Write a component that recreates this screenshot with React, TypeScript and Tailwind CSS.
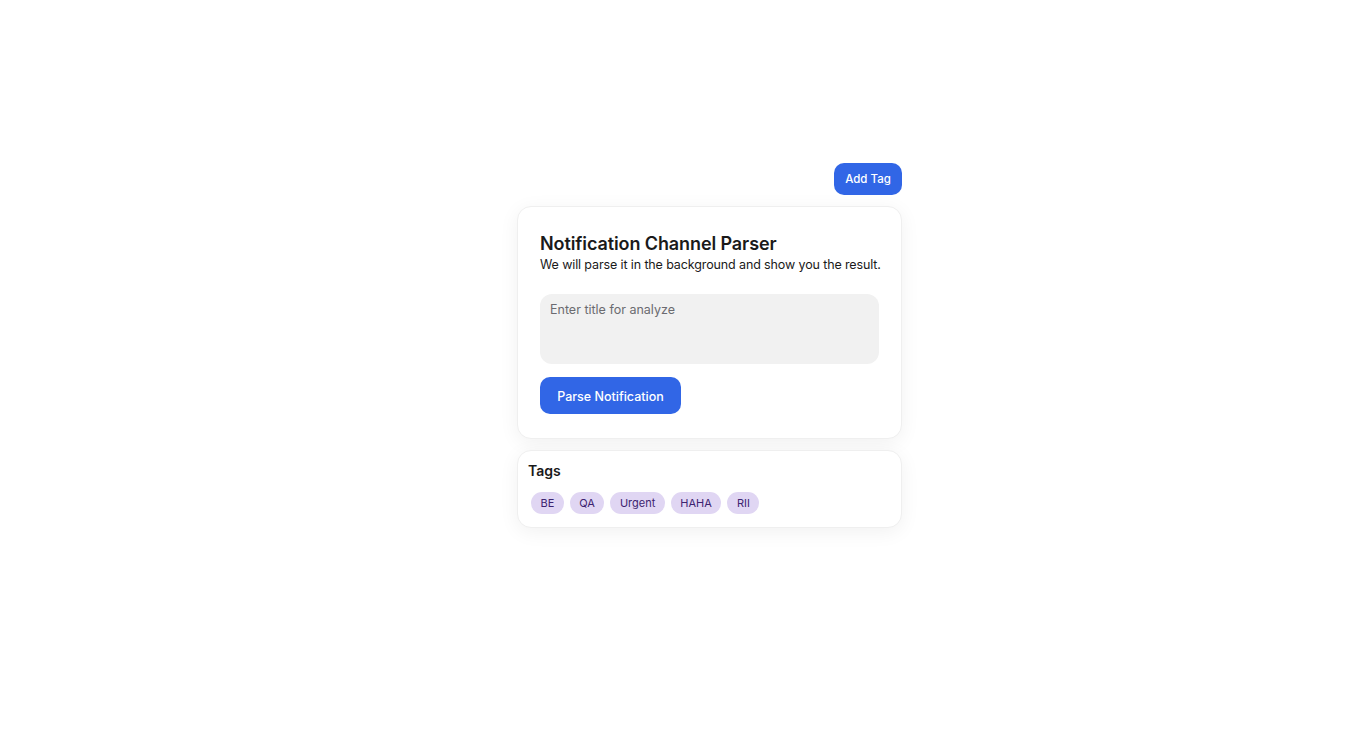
import React from "react";

export default function App() {
  const tags = ["BE", "QA", "Urgent", "HAHA", "RII"];
  return (
    <div
      className="min-h-screen w-full bg-white"
      style={{ fontFamily: "Inter, 'Noto Sans', sans-serif" }}
    >
      <div className="ml-[517px] w-[385px] pt-[163px] flex flex-col">
        <div className="flex justify-end">
          <button className="flex h-[32px] w-[68px] items-center justify-center rounded-[10px] bg-[#3166e6] pt-[2px] text-[11.5px] leading-none font-medium text-white">
            Add Tag
          </button>
        </div>
        <div className="mt-[11px] rounded-[14px] border border-[#efefef] bg-white px-[22px] pt-[24px] pb-[24px] shadow-[0_4px_20px_rgba(0,0,0,0.06)]">
          <h1 className="whitespace-nowrap text-[18px] font-semibold leading-[26px] tracking-[-0.1px] text-[#1a1a1a]">
            Notification Channel Parser
          </h1>
          <p className="whitespace-nowrap text-[12.5px] leading-[16px] tracking-[-0.12px] text-[#1a1a1a]">
            We will parse it in the background and show you the result.
          </p>
          <textarea
            className="mt-[21px] block h-[70px] w-full resize-none rounded-[12px] bg-[#f1f1f1] px-[10px] py-[7px] text-[12.5px] leading-[17px] text-[#1a1a1a] outline-none placeholder:text-[#6b6b70]"
            placeholder="Enter title for analyze"
          />
          <button className="mt-[13px] flex h-[37px] w-[141px] items-center justify-center rounded-[10px] bg-[#3166e6] pt-[3px] text-[12.5px] leading-none font-medium text-white">
            Parse Notification
          </button>
        </div>
        <div className="mt-[11px] rounded-[14px] border border-[#efefef] bg-white px-[10px] pt-[11px] pb-[13px] shadow-[0_4px_20px_rgba(0,0,0,0.06)]">
          <h2 className="text-[14px] font-semibold leading-[18px] text-[#1a1a1a]">Tags</h2>
          <div className="mt-[12px] ml-[3px] flex gap-[6px]">
            {tags.map((t) => (
              <span
                key={t}
                className="flex h-[22px] items-center rounded-full bg-[#e0d6f3] px-[9.5px] text-[11px] text-[#3d2470]"
              >
                {t}
              </span>
            ))}
          </div>
        </div>
      </div>
    </div>
  );
}
